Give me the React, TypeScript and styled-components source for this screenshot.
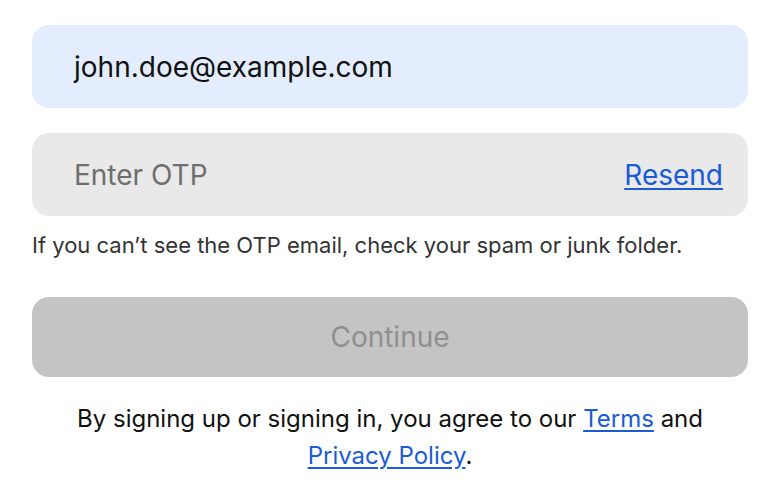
import styled, { createGlobalStyle } from 'styled-components';

const GlobalStyle = createGlobalStyle`
  body {
    margin: 0;
    background: #ffffff;
    font-family: Inter, "Noto Sans", sans-serif;
  }
`;

const Page = styled.div`
  display: flex;
  flex-direction: column;
  padding: 25px 26px 0 32px;
`;

const Field = styled.div<{ $tone: 'filled' | 'empty' }>`
  display: flex;
  align-items: center;
  justify-content: space-between;
  height: 83px;
  box-sizing: border-box;
  padding: 0 25px 0 42px;
  border-radius: 17px;
  background: ${p => (p.$tone === 'filled' ? '#e3edfd' : '#e9e9e9')};
  font-size: 28px;
  color: ${p => (p.$tone === 'filled' ? '#111111' : '#6e6e6e')};
  & + & {
    margin-top: 25px;
  }
`;

const Link = styled.a`
  color: #1a5bd6;
  text-decoration: underline;
  text-underline-offset: 3px;
  cursor: pointer;
`;

const Hint = styled.p`
  margin: 14px 0 0;
  font-size: 22px;
  line-height: 30px;
  color: #333333;
`;

const ContinueButton = styled.button`
  margin-top: 37px;
  height: 80px;
  border: none;
  border-radius: 17px;
  background: #c4c4c4;
  color: #8f8f8f;
  font-family: inherit;
  font-size: 28px;
`;

const Legal = styled.p`
  margin: 23px 0 0;
  text-align: center;
  font-size: 24px;
  line-height: 37px;
  color: #111111;
`;

export default function App() {
  return (
    <>
      <GlobalStyle />
      <Page>
        <Field $tone="filled">john.doe@example.com</Field>
        <Field $tone="empty">
          <span>Enter OTP</span>
          <Link>Resend</Link>
        </Field>
        <Hint>If you can’t see the OTP email, check your spam or junk folder.</Hint>
        <ContinueButton disabled>Continue</ContinueButton>
        <Legal>
          By signing up or signing in, you agree to our <Link>Terms</Link> and
          <br />
          <Link>Privacy Policy</Link>.
        </Legal>
      </Page>
    </>
  );
}
